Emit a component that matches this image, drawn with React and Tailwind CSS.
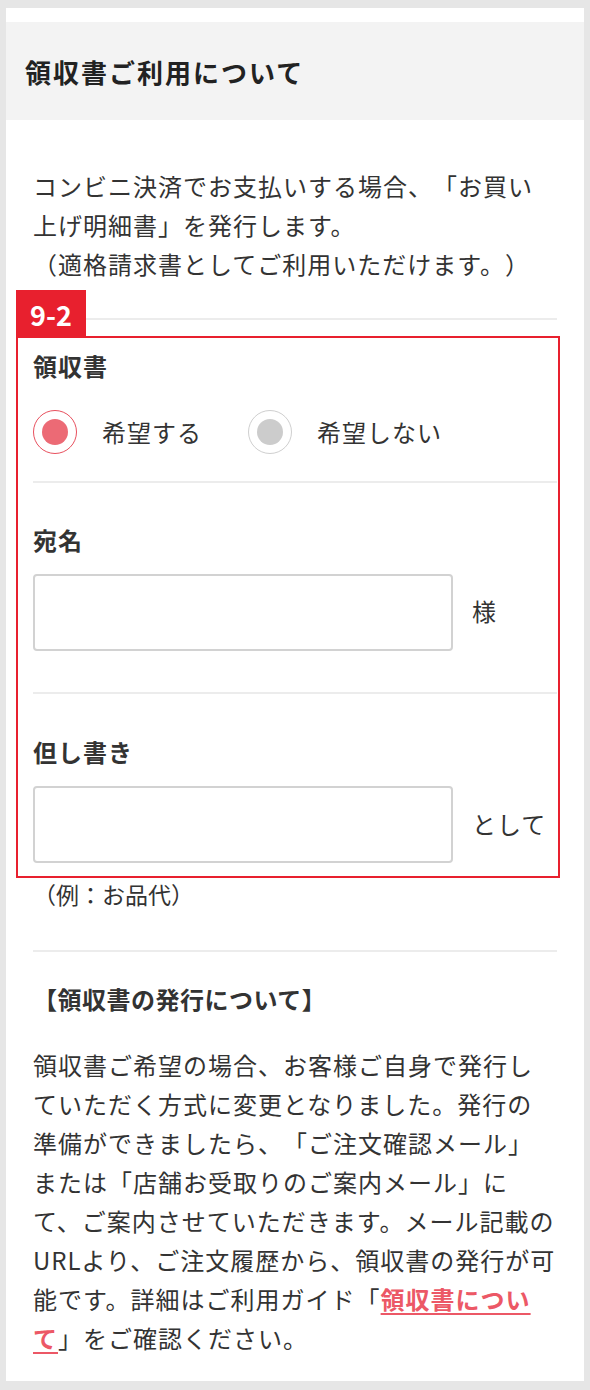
import React from 'react';

const font = { fontFamily: '"Noto Sans CJK JP", "Noto Sans", sans-serif' };

const Radio = ({ checked, label }) => (
  <label className="flex items-center gap-[25px]">
    <span
      className={`flex h-[44px] w-[44px] items-center justify-center rounded-full border-[1.5px] ${
        checked ? 'border-[#e8505e]' : 'border-[#cfcfcf]'
      }`}
    >
      <span className={`h-[26px] w-[26px] rounded-full ${checked ? 'bg-[#ec6a75]' : 'bg-[#cccccc]'}`} />
    </span>
    <span className="text-[24px] tracking-[1px] text-[#333]">{label}</span>
  </label>
);

const paragraphLines = [
  '領収書ご希望の場合、お客様ご自身で発行し',
  'ていただく方式に変更となりました。発行の',
  '準備ができましたら、「ご注文確認メール」',
  'または「店舗お受取りのご案内メール」に',
  'て、ご案内させていただきます。メール記載の',
  'URLより、ご注文履歴から、領収書の発行が可',
];

export default function App() {
  return (
    <div className="min-h-[1390px] bg-[#e6e6e6] px-[6px] pt-[8px] [text-spacing-trim:space-all]" style={font}>
      <div className="bg-white pt-[14px] pb-[24px]">
        {/* Header band */}
        <div className="flex h-[98px] items-center bg-[#f3f3f3] px-[19px]">
          <h2 className="text-[26px] font-bold tracking-[2px] text-[#222]">領収書ご利用について</h2>
        </div>

        <div className="px-[27px]">
          <p className="mt-[46px] text-[24px] leading-[39px] tracking-[1px] text-[#333]">
            <span className="block whitespace-nowrap">コンビニ決済でお支払いする場合、「お買い</span>
            <span className="block whitespace-nowrap">上げ明細書」を発行します。</span>
            <span className="block whitespace-nowrap">（適格請求書としてご利用いただけます。）</span>
          </p>

          <div className="mt-[35px] border-t-2 border-[#ececec]" />

          {/* Receipt form section (annotated 9-2) */}
          <div className="relative mt-[16px]">
            <div className="pointer-events-none absolute -left-[17px] -right-[3px] top-0 bottom-0 border-2 border-[#e8202e]" />
            <div className="absolute -left-[17px] -top-[46px] flex h-[46px] w-[70px] items-center justify-center bg-[#e8202e] pt-[4px] text-[27px] font-bold text-white">
              9-2
            </div>

            <div className="pt-[15px] pb-[27px]">
              <div className="text-[24px] font-bold leading-[30px] tracking-[1px] text-[#333]">領収書</div>
              <div className="mt-[29px] flex items-center gap-[46px]">
                <Radio checked label="希望する" />
                <Radio label="希望しない" />
              </div>
            </div>

            <div className="border-t-2 border-[#ececec] pt-[42px] pb-[41px]">
              <div className="text-[24px] font-bold leading-[30px] tracking-[1px] text-[#333]">宛名</div>
              <div className="mt-[19px] flex items-center gap-[19px]">
                <input className="h-[77px] w-[420px] rounded-[4px] border-2 border-[#d2d2d2] bg-white px-3 text-[22px] outline-none" />
                <span className="-mt-[4px] text-[24px] text-[#333]">様</span>
              </div>
            </div>

            <div className="border-t-2 border-[#ececec] pt-[43px] pb-[15px]">
              <div className="text-[24px] font-bold leading-[30px] tracking-[1px] text-[#333]">但し書き</div>
              <div className="mt-[19px] flex items-center gap-[19px]">
                <input className="h-[77px] w-[420px] rounded-[4px] border-2 border-[#d2d2d2] bg-white px-3 text-[22px] outline-none" />
                <span className="-mt-[2px] text-[24px] tracking-[1px] text-[#333]">として</span>
              </div>
            </div>
          </div>

          <p className="text-[23px] leading-[32px] text-[#333]">（例：お品代）</p>

          <div className="mt-[40px] border-t-2 border-[#ececec]" />

          <h3 className="mt-[32px] text-[24px] font-bold leading-[30px] tracking-[0.5px] text-[#333]">
            【領収書の発行について】
          </h3>

          <p className="mt-[31px] text-[24px] leading-[39px] tracking-[1px] text-[#333]">
            {paragraphLines.map((line) => (
              <span key={line} className="block whitespace-nowrap">
                {line}
              </span>
            ))}
            <span className="block whitespace-nowrap">
              能です。詳細はご利用ガイド「
              <a href="#" className="font-bold text-[#ec5866] underline underline-offset-4">
                領収書につい
              </a>
            </span>
            <span className="block whitespace-nowrap">
              <a href="#" className="font-bold text-[#ec5866] underline underline-offset-4">
                て
              </a>
              」をご確認ください。
            </span>
          </p>
        </div>
      </div>
    </div>
  );
}
